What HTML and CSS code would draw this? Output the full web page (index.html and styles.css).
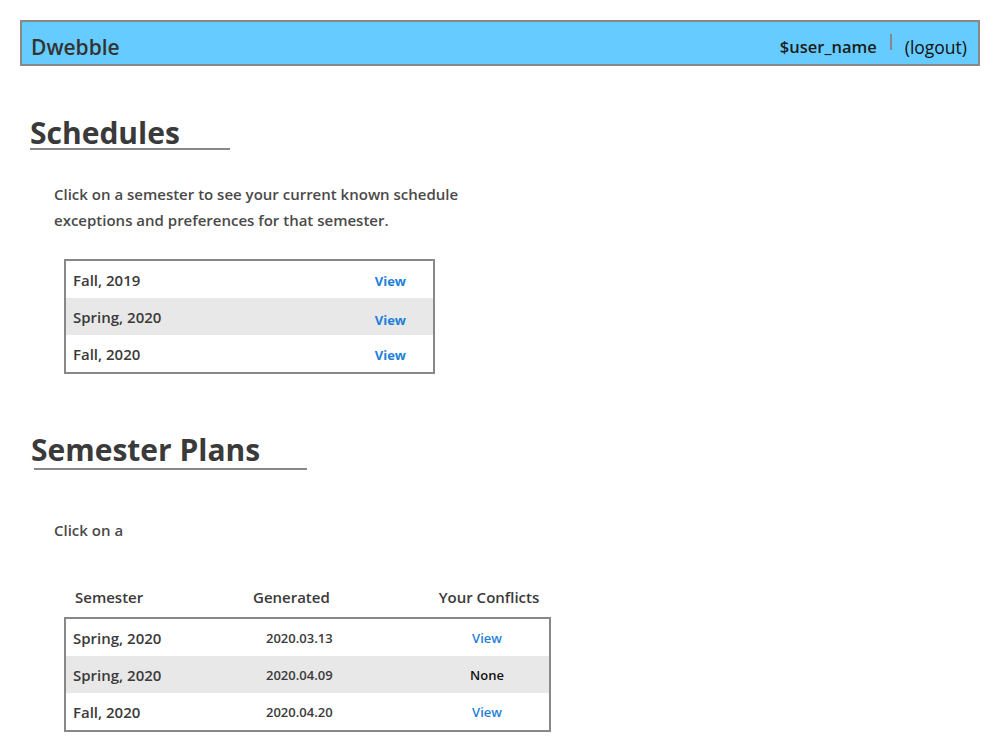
FILE: index.html
```html
<!DOCTYPE html>
<html>
<head>
<meta charset="utf-8">
<link rel="stylesheet" href="styles.css">
</head>
<body>
<header class="topbar">
  <div class="brand">Dwebble</div>
  <div class="user">
    <span class="username">$user_name</span>
    <span class="sep"></span>
    <span class="logout">(logout)</span>
  </div>
</header>

<section class="section">
  <h1 class="title title-schedules">Schedules</h1>
  <p class="intro">Click on a semester to see your current known schedule<br>exceptions and preferences for that semester.</p>
  <div class="box box-schedules">
    <div class="row"><span class="sem">Fall, 2019</span><span class="view">View</span></div>
    <div class="row alt"><span class="sem">Spring, 2020</span><span class="view low">View</span></div>
    <div class="row"><span class="sem">Fall, 2020</span><span class="view">View</span></div>
  </div>
</section>

<section class="section plans">
  <h1 class="title title-plans">Semester Plans</h1>
  <p class="intro short">Click on a</p>
  <div class="plan-head">
    <span class="c1">Semester</span>
    <span class="c2">Generated</span>
    <span class="c3">Your Conflicts</span>
  </div>
  <div class="box box-plans">
    <div class="prow"><span class="c1">Spring, 2020</span><span class="c2 date">2020.03.13</span><span class="c3 link">View</span></div>
    <div class="prow alt"><span class="c1">Spring, 2020</span><span class="c2 date">2020.04.09</span><span class="c3 none">None</span></div>
    <div class="prow"><span class="c1">Fall, 2020</span><span class="c2 date">2020.04.20</span><span class="c3 link">View</span></div>
  </div>
</section>
</body>
</html>
```

FILE: styles.css
```css
* { box-sizing: border-box; }
body {
  margin: 0;
  padding: 20px 20px 0 20px;
  font-family: "Open Sans", "Noto Sans", sans-serif;
  color: #3a3a3a;
  background: #fff;
}
.topbar {
  height: 46px;
  background: #66ccff;
  border: 2px solid #888;
  display: flex;
  align-items: center;
  justify-content: space-between;
  padding: 7px 11px 0 9px;
}
.brand {
  font-size: 21px;
  font-weight: 600;
  color: #333;
}
.user {
  display: flex;
  align-items: center;
  font-size: 16.5px;
  font-weight: 600;
  color: #1c1c1c;
}
.logout { font-weight: 400; font-size: 17.5px; color: #111; }
.sep {
  width: 2px;
  height: 16px;
  background: #888;
  margin: 0 13px 9px 13px;
}
.section {
  padding-left: 10px;
}
.title {
  margin: 0;
  font-size: 30px;
  font-weight: 700;
  color: #3a3a3a;
  border-bottom: 2px solid #888;
  line-height: 36px;
  padding-bottom: 0;
}
.title-schedules {
  width: 200px;
  margin-top: 52px;
  line-height: 30px;
}
.intro {
  margin: 31px 0 0 24px;
  font-size: 15px;
  line-height: 26px;
  font-weight: 600;
  color: #4a4a4a;
}
.box {
  border: 2px solid #888;
  margin-left: 34px;
}
.box-schedules {
  width: 371px;
  margin-top: 26px;
}
.row {
  height: 37px;
  display: flex;
  align-items: center;
  justify-content: space-between;
  padding: 0 27px 0 7px;
  font-size: 15px;
  font-weight: 600;
}
.row.alt, .prow.alt { background: #e8e8e8; }
.view {
  color: #1e7fd8;
  font-size: 13px;
  font-weight: 700;
  padding-top: 2px;
}
.view.low { padding-top: 6px; }
.plans { padding-top: 58px; }
.title-plans {
  width: 273px;
  margin-left: 4px;
  text-indent: -3px;
}
.intro.short { margin-top: 47px; }
.plan-head {
  display: flex;
  margin: 41px 0 7px 34px;
  width: 487px;
  height: 26px;
  align-items: center;
  font-size: 15px;
  font-weight: 600;
}
.box-plans { width: 487px; margin-top: 0; }
.prow {
  height: 37px;
  display: flex;
  align-items: center;
  font-size: 15px;
  font-weight: 600;
}
.c1 { width: 189px; padding-left: 11px; }
.c2 { width: 170px; }
.c3 { flex: 1; text-align: center; }
.plan-head .c3 { padding-left: 4px; }
.prow .c1 { padding-left: 7px; }
.date { font-size: 13px; font-weight: 600; padding-left: 11px; }
.link { color: #1e7fd8; font-size: 13px; font-weight: 600; }
.none { color: #111; font-size: 13px; font-weight: 600; }
```
